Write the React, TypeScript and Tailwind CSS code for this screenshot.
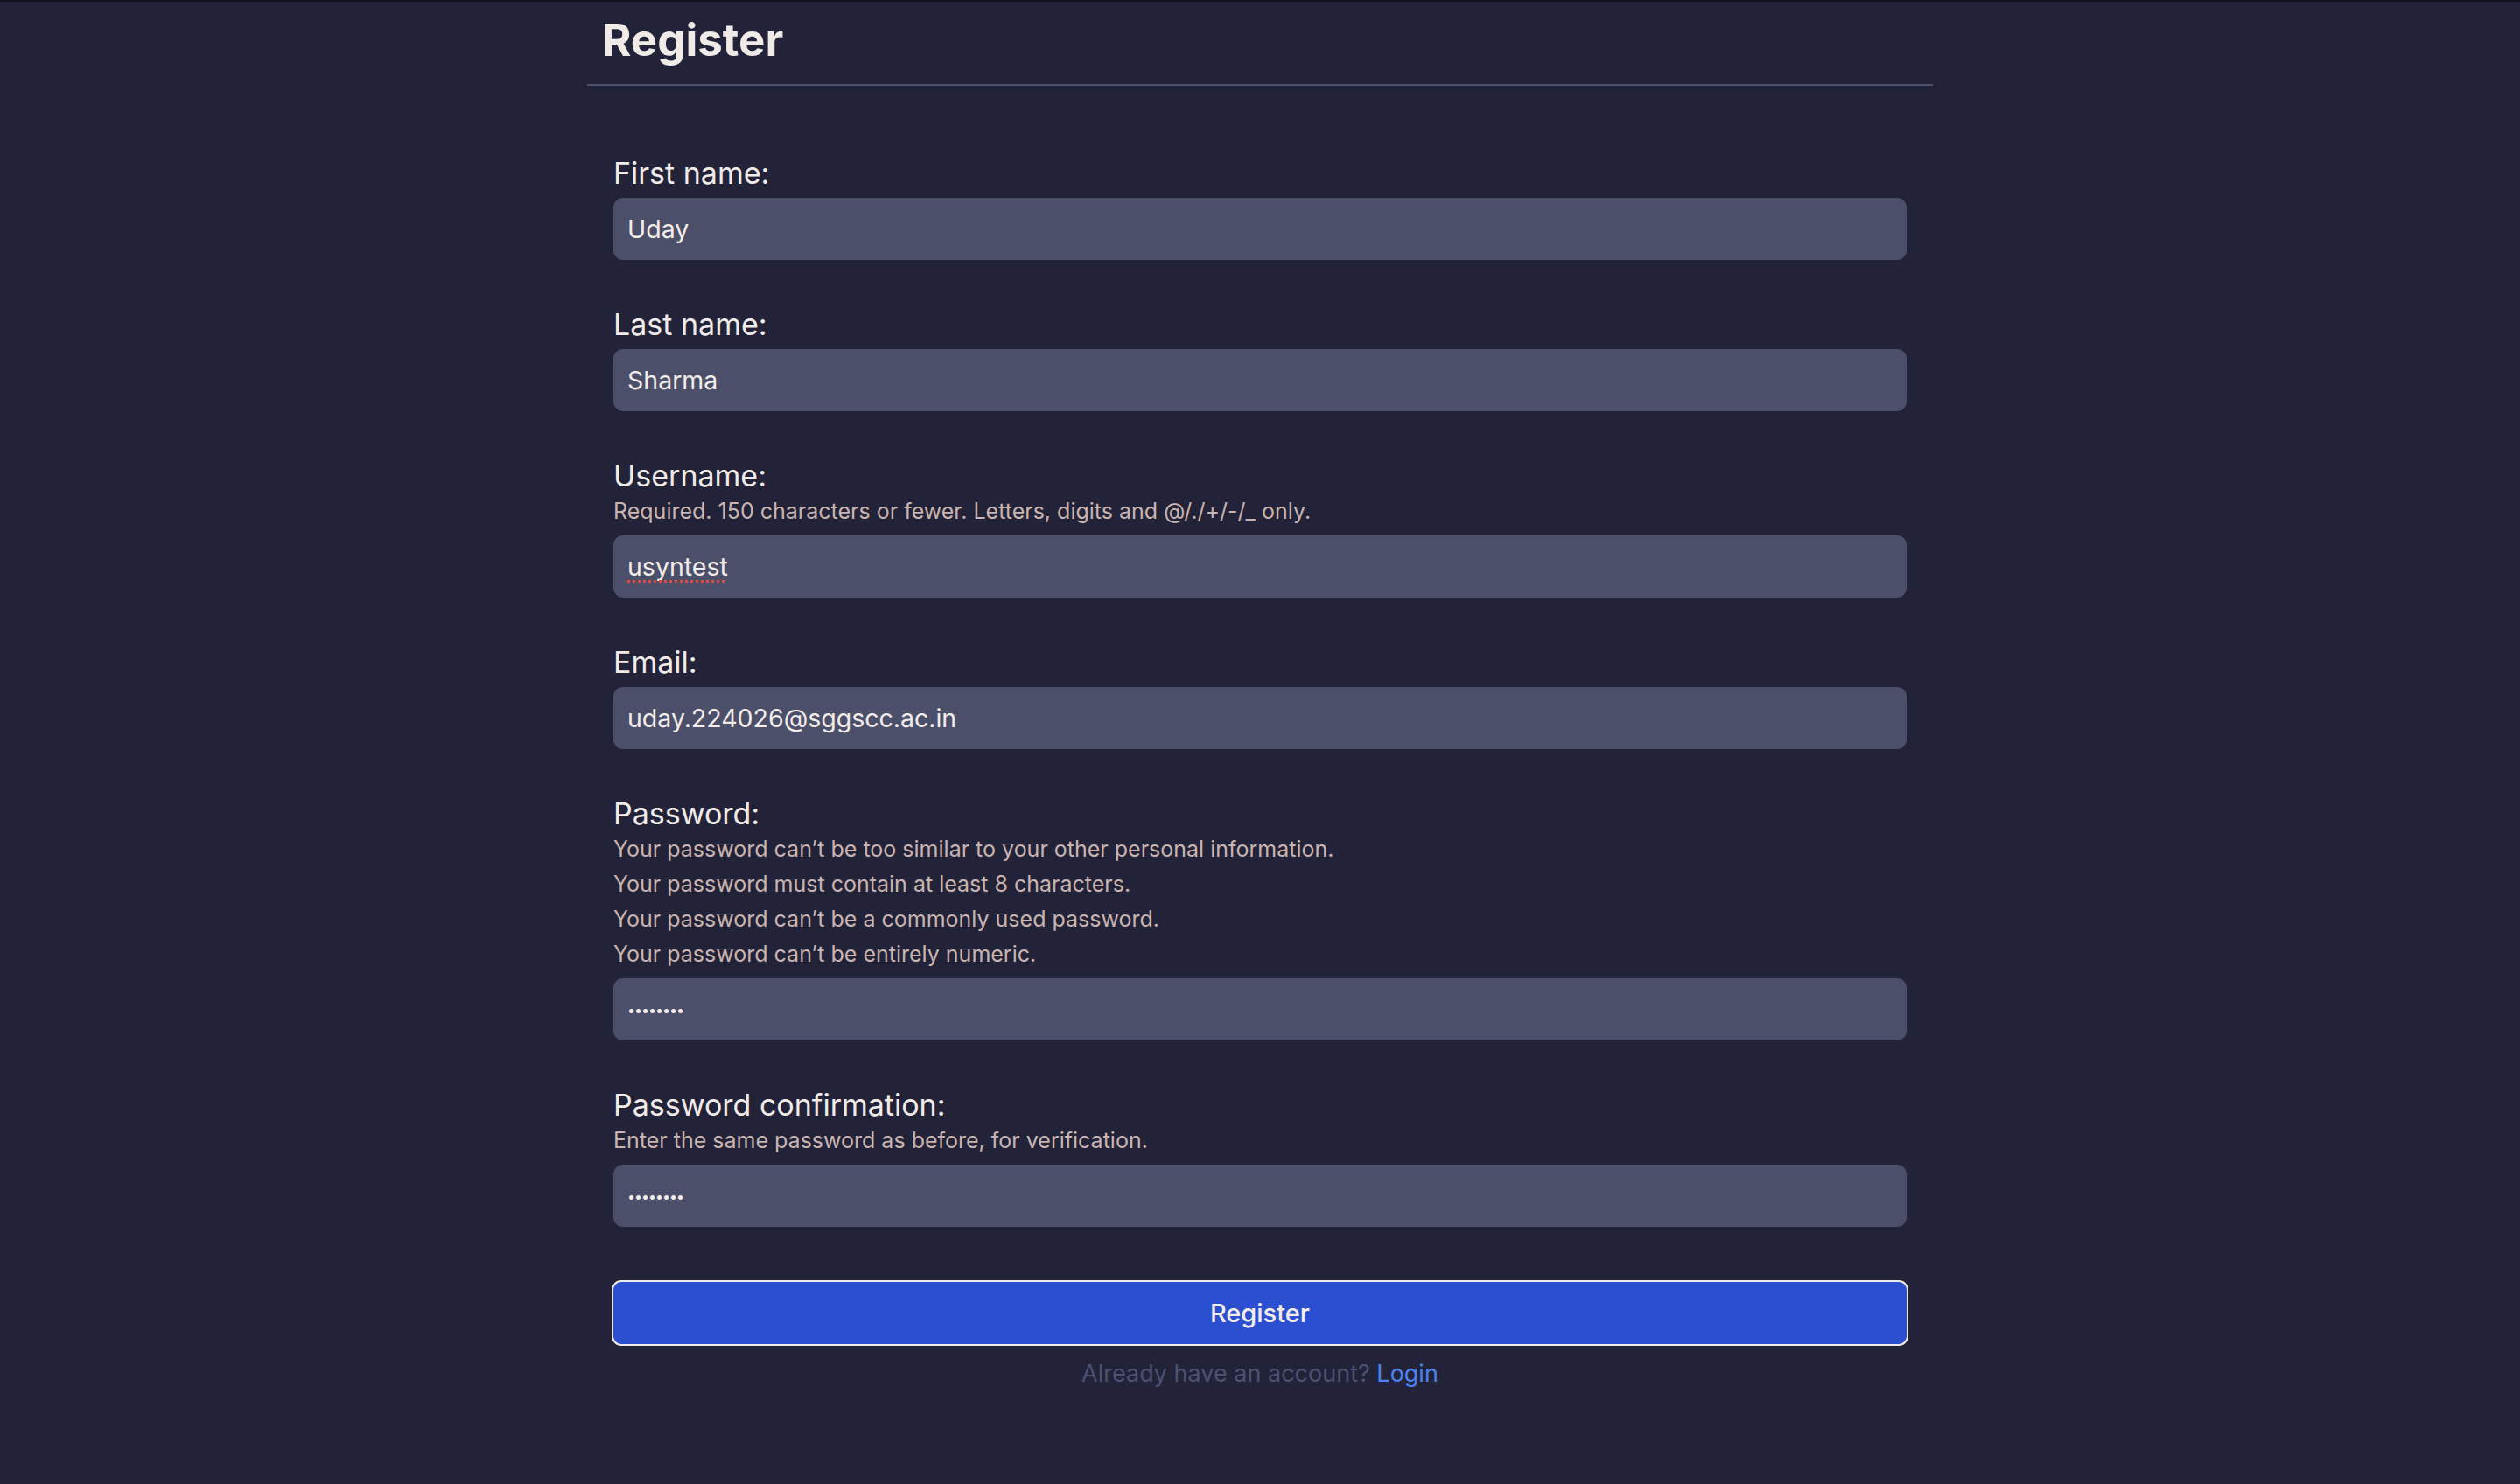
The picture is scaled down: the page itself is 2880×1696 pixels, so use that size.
import React from "react";

const font = { fontFamily: "Inter, 'Noto Sans', sans-serif" };

function Field({
  label,
  value,
  type = "text",
  help = [],
  spell = false,
}: {
  label: string;
  value: string;
  type?: string;
  help?: string[];
  spell?: boolean;
}) {
  const isPw = type === "password";
  return (
    <div className="flex flex-col">
      <label className="text-[34px] leading-[40px] text-[#f1ebe8]">{label}</label>
      {help.map((h) => (
        <div key={h} className="text-[25px] leading-[40px] text-[#c9b4b0]">
          {h}
        </div>
      ))}
      <div className="relative mt-[8px]">
        <input
          readOnly
          type={type}
          value={value}
          spellCheck={false}
          className={
            isPw
              ? "block h-[71px] w-full rounded-[11px] bg-[#4b4f6a] px-[16px] text-[16px] tracking-[-1px] text-[#f3ece9] outline-none"
              : "block h-[71px] w-full rounded-[11px] bg-[#4b4f6a] px-[16px] text-[28.5px] text-[#f3ece9] outline-none"
          }
          style={font}
        />
        {spell && (
          <span className="pointer-events-none absolute left-[16px] top-0 flex h-[71px] items-center text-[28.5px] text-transparent underline decoration-dotted decoration-[#e04a3f] decoration-[3px] underline-offset-[6px]">
            {value}
          </span>
        )}
      </div>
    </div>
  );
}

export default function App() {
  return (
    <div className="min-h-screen border-t-2 border-[#12121f] bg-[#222238]" style={font}>
      <div className="mx-auto w-[1538px]">
        <h1 className="pl-[17px] pt-[12px] pb-[18px] text-[51px] font-bold leading-[64px] text-[#f1ebe8]">
          Register
        </h1>
        <div className="h-[2px] bg-[#4b4f6a]" />
        <form className="flex flex-col gap-[54px] px-[30px] pt-[80px]">
          <Field label="First name:" value="Uday" />
          <Field label="Last name:" value="Sharma" />
          <Field
            label="Username:"
            value="usyntest"
            spell
            help={["Required. 150 characters or fewer. Letters, digits and @/./+/-/_ only."]}
          />
          <Field label="Email:" value="uday.224026@sggscc.ac.in" />
          <Field
            label="Password:"
            type="password"
            value="12345678"
            help={[
              "Your password can\u2019t be too similar to your other personal information.",
              "Your password must contain at least 8 characters.",
              "Your password can\u2019t be a commonly used password.",
              "Your password can\u2019t be entirely numeric.",
            ]}
          />
          <Field
            label="Password confirmation:"
            type="password"
            value="12345678"
            help={["Enter the same password as before, for verification."]}
          />
        </form>
        <div className="px-[28px] pt-[61px]">
          <button
            type="button"
            className="block h-[75px] w-full rounded-[11px] border-2 border-[#f1ebe8] bg-[#2b4fd1] text-[29px] font-medium text-[#f3ece9]"
            style={font}
          >
            Register
          </button>
          <p className="pt-[12px] text-center text-[27px] leading-[40px] text-[#4d5172]">
            Already have an account? <a className="text-[#4c82f0]">Login</a>
          </p>
        </div>
      </div>
    </div>
  );
}
